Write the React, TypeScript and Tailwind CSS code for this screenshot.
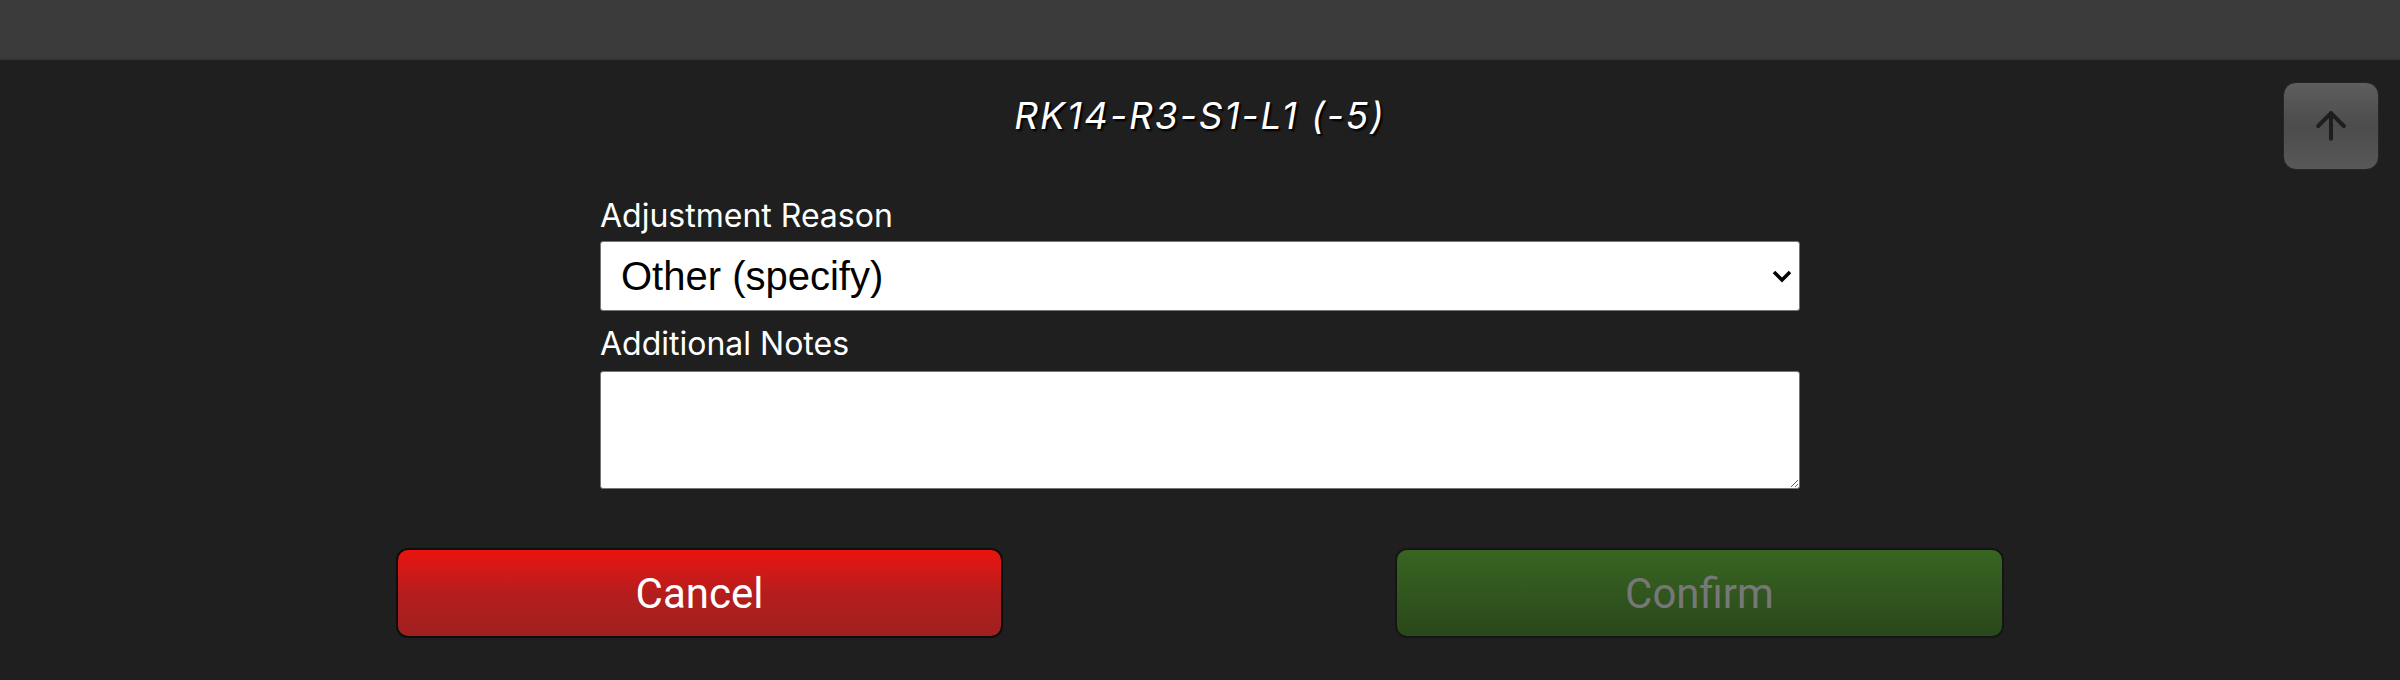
import { ArrowUp } from "lucide-react";

export default function App() {
  return (
    <div className="min-h-[680px] bg-[#1f1f1f]">
      {/* top bar */}
      <div className="h-[60px] bg-[#3b3b3b] border-b-2 border-[#353535]" />

      <div className="relative pt-[33px]">
        <h1 className="text-center text-white italic text-[37px] leading-[46px] tracking-[2px] font-['Inter',sans-serif] [text-shadow:2px_2px_2px_#000]">
          RK14-R3-S1-L1 (-5)
        </h1>
        <button className="absolute right-[21px] top-[22px] w-[96px] h-[88px] rounded-[13px] border border-[#262626] bg-gradient-to-b from-[#5e5e5e] via-[#4c4c4c] to-[#585858] flex items-center justify-center">
          <ArrowUp className="w-[44px] h-[44px] text-[#1e1e1e]" strokeWidth={2.2} />
        </button>
      </div>

      <div className="mx-auto w-[1200px] mt-[58px] flex flex-col font-['Inter',sans-serif]">
        <label className="text-white text-[32px] leading-[38px] mb-[6px]">Adjustment Reason</label>
        <div className="relative">
          <select
            defaultValue="other"
            className="w-full h-[70px] appearance-none bg-white text-black border border-[#767676] rounded-[3px] pl-[20px] text-[40px] font-['Liberation_Sans',Arial,sans-serif] outline-none"
          >
            <option value="damaged">Damaged</option>
            <option value="count">Count Correction</option>
            <option value="other">Other (specify)</option>
          </select>
          <svg
            className="absolute right-[8px] top-[28px] w-[20px] h-[14px] pointer-events-none"
            viewBox="0 0 20 14"
            fill="none"
            stroke="#000"
            strokeWidth="3.5"
          >
            <path d="M2 3l8 8 8-8" />
          </svg>
        </div>
        <label className="text-white text-[32px] leading-[38px] mt-[14px] mb-[8px]">Additional Notes</label>
        <textarea className="w-full h-[118px] bg-white text-black border border-[#767676] rounded-[3px] outline-none" />
      </div>

      <div className="mx-auto w-[2000px] mt-[59px] flex justify-around font-['Roboto',sans-serif]">
        <button className="w-[607px] h-[90px] rounded-[12px] border-2 border-[#0d0d0d] bg-gradient-to-b from-[#ec120d] via-[#b51d1d] to-[#a02020] text-white text-[42px]">
          Cancel
        </button>
        <button
          disabled
          className="w-[609px] h-[90px] rounded-[12px] border-2 border-[#151515] bg-gradient-to-b from-[#386521] to-[#2a481b] text-[#777777] text-[42px]"
        >
          Confirm
        </button>
      </div>
    </div>
  );
}
